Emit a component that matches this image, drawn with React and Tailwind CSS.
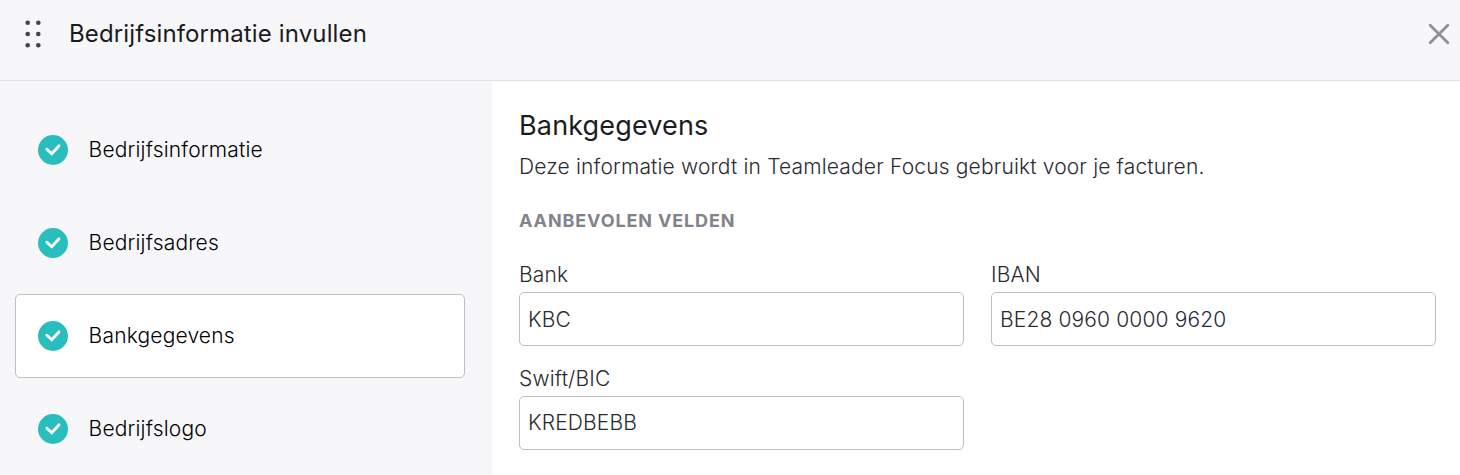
import React from 'react';

const steps = [
  { label: 'Bedrijfsinformatie', active: false },
  { label: 'Bedrijfsadres', active: false },
  { label: 'Bankgegevens', active: true },
  { label: 'Bedrijfslogo', active: false }
];

const CheckBadge = () => (
  <svg className="w-[30px] h-[30px] shrink-0" viewBox="0 0 30 30" fill="none">
    <circle cx="15" cy="15" r="15" fill="#2abdbd" />
    <path d="M8.9 14.3l4.8 4.4 7.2-7.8" stroke="#fff" strokeWidth="2.9" strokeLinecap="round" />
  </svg>
);

const DragHandle = () => (
  <svg className="w-[18px] h-7 shrink-0" viewBox="0 0 18 28" fill="#444">
    {[2.7, 14, 25.2].map((y) => (
      <g key={y}>
        <circle cx="3.7" cy={y} r="2.3" />
        <circle cx="14.3" cy={y} r="2.3" />
      </g>
    ))}
  </svg>
);

const Field = ({ label, value }) => (
  <label className="block">
    <span className="block h-[30px] leading-[26px] text-[21px] tracking-[0.16px]">{label}</span>
    <input
      type="text"
      defaultValue={value}
      className="block w-full h-[54px] px-2 rounded-[5px] border border-[#bfbfc2] bg-white text-[21px] tracking-[0.13px] outline-none"
    />
  </label>
);

const App = () => {
  return (
    <div className="h-[475px] overflow-hidden bg-white text-[#2a2b31] font-light font-['Inter',sans-serif] flex flex-col">
      {/* Header */}
      <header className="h-[81px] shrink-0 bg-[#f7f7fa] border-b border-[#e1e1e5] flex items-start pl-6 pr-[10px] pt-5">
        <DragHandle />
        <h1 className="ml-[27px] text-[24px] leading-7 font-normal tracking-[0.13px] text-[#1a1c20]">
          Bedrijfsinformatie invullen
        </h1>
        <button type="button" aria-label="Sluiten" className="ml-auto mt-[3px]">
          <svg className="w-[22px] h-[22px]" viewBox="0 0 22 22" fill="none" stroke="#8f9098" strokeWidth="2.8">
            <path d="M2.2 2.2l17.6 17.6M19.8 2.2l-17.6 17.6" strokeLinecap="round" />
          </svg>
        </button>
      </header>

      <div className="flex flex-1 min-h-0">
        {/* Steps */}
        <nav className="w-[492px] shrink-0 bg-[#f7f7fa] px-[15px] pt-[27px] flex flex-col gap-[9px]">
          {steps.map((step) => (
            <div
              key={step.label}
              className={`h-[84px] w-[450px] shrink-0 rounded-[5px] border pl-[22px] flex items-center gap-[20.6px] ${
                step.active ? 'bg-white border-[#bfbfc4]' : 'border-transparent'
              }`}
            >
              <CheckBadge />
              <span className="text-[21px] tracking-[0.18px] text-black">{step.label}</span>
            </div>
          ))}
        </nav>

        {/* Bank details */}
        <main className="flex-1 pl-[27px] pr-6 pt-[27px]">
          <h2 className="text-[27px] leading-9 font-normal tracking-[0.15px] text-[#1a1c20]">Bankgegevens</h2>
          <p className="mt-[9px] text-[21px] leading-7 tracking-[0.16px]">
            Deze informatie wordt in Teamleader Focus gebruikt voor je facturen.
          </p>
          <h3 className="mt-[26px] text-[18px] leading-7 font-bold tracking-[0.87px] text-[#82828c]">
            AANBEVOLEN VELDEN
          </h3>
          <div className="mt-[27px] grid grid-cols-2 gap-x-[27px] gap-y-[19.5px]">
            <Field label="Bank" value="KBC" />
            <Field label="IBAN" value="BE28 0960 0000 9620" />
            <Field label="Swift/BIC" value="KREDBEBB" />
          </div>
        </main>
      </div>
    </div>
  );
};

export default App;
